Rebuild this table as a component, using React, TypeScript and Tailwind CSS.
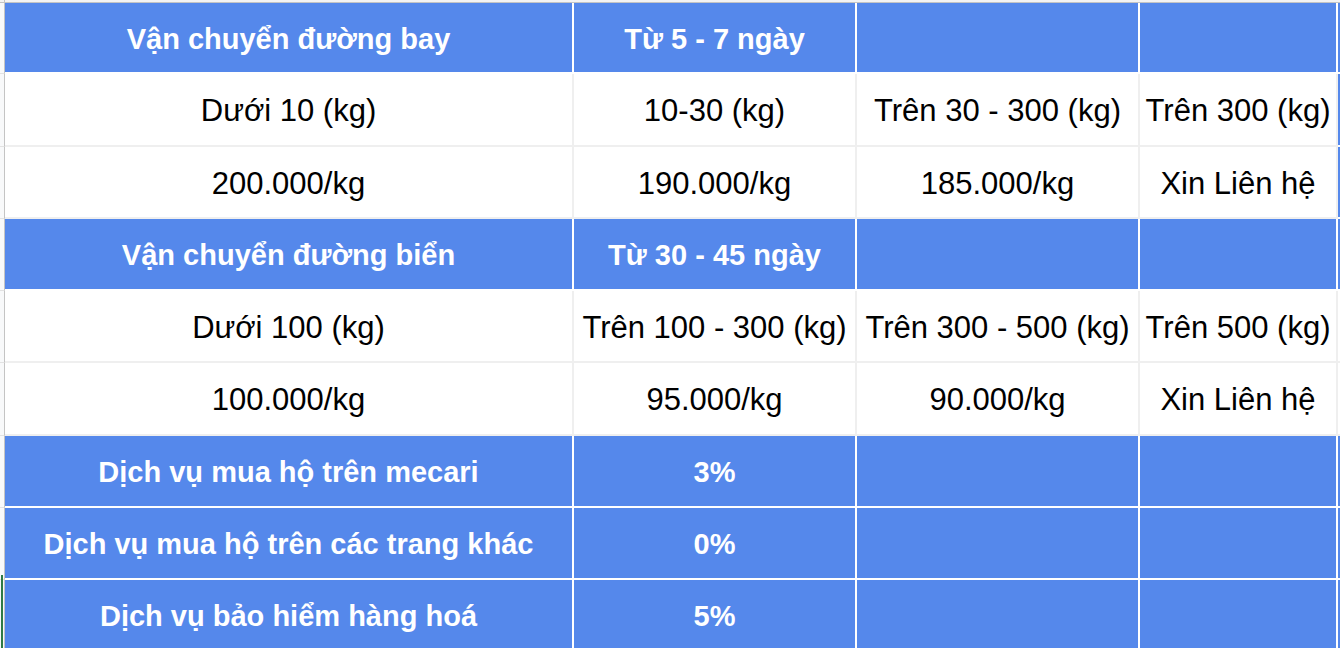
type Cell = {
  text?: string;
  blue?: boolean;
  bold?: boolean;
};

type Row = {
  height: string;
  cells: Cell[];
  edgeBlue: boolean;
  marker?: boolean;
};

const widths = ["w-[569px]", "w-[283px]", "w-[283px]", "w-[198px]"];

const rows: Row[] = [
  {
    height: "h-[71px]",
    edgeBlue: true,
    cells: [
      { text: "Vận chuyển đường bay", blue: true, bold: true },
      { text: "Từ 5 - 7 ngày", blue: true, bold: true },
      { blue: true },
      { blue: true },
    ],
  },
  {
    height: "h-[73px]",
    edgeBlue: true,
    cells: [
      { text: "Dưới 10 (kg)" },
      { text: "10-30 (kg)" },
      { text: "Trên 30 - 300 (kg)" },
      { text: "Trên 300 (kg)" },
    ],
  },
  {
    height: "h-[72px]",
    edgeBlue: true,
    cells: [
      { text: "200.000/kg" },
      { text: "190.000/kg" },
      { text: "185.000/kg" },
      { text: "Xin Liên hệ" },
    ],
  },
  {
    height: "h-[72px]",
    edgeBlue: true,
    cells: [
      { text: "Vận chuyển đường biển", blue: true, bold: true },
      { text: "Từ 30 - 45 ngày", blue: true, bold: true },
      { blue: true },
      { blue: true },
    ],
  },
  {
    height: "h-[72px]",
    edgeBlue: false,
    cells: [
      { text: "Dưới 100 (kg)" },
      { text: "Trên 100 - 300 (kg)" },
      { text: "Trên 300 - 500 (kg)" },
      { text: "Trên 500 (kg)" },
    ],
  },
  {
    height: "h-[73px]",
    edgeBlue: false,
    cells: [
      { text: "100.000/kg" },
      { text: "95.000/kg" },
      { text: "90.000/kg" },
      { text: "Xin Liên hệ" },
    ],
  },
  {
    height: "h-[72px]",
    edgeBlue: true,
    cells: [
      { text: "Dịch vụ mua hộ trên mecari", blue: true, bold: true },
      { text: "3%", blue: true, bold: true },
      { blue: true },
      { blue: true },
    ],
  },
  {
    height: "h-[72px]",
    edgeBlue: true,
    cells: [
      { text: "Dịch vụ mua hộ trên các trang khác", blue: true, bold: true },
      { text: "0%", blue: true, bold: true },
      { blue: true },
      { blue: true },
    ],
  },
  {
    height: "h-[72px]",
    edgeBlue: true,
    marker: true,
    cells: [
      { text: "Dịch vụ bảo hiểm hàng hoá", blue: true, bold: true },
      { text: "5%", blue: true, bold: true },
      { blue: true },
      { blue: true },
    ],
  },
];

export default function App() {
  return (
    <div className="h-[648px] w-[1340px] overflow-hidden bg-white font-['Liberation_Sans',Arial,sans-serif]">
      {/* top frozen strip */}
      <div className="flex h-[3px] border-b border-[#c4c4c4] bg-[#f3f3f3]">
        <div className="w-[5px] shrink-0 border-r border-[#c4c4c4]" />
      </div>

      {rows.map((row, ri) => (
        <div key={ri} className={`flex ${row.height}`}>
          {/* row gutter */}
          <div className="relative w-[5px] shrink-0 border-r border-b border-r-[#c4c4c4] border-b-[#e2e2e2] bg-[#f8f9fa]">
            {row.marker && (
              <div className="absolute -top-[5px] bottom-0 left-[1px] w-[2px] bg-[#2f7a45]" />
            )}
          </div>

          {row.cells.map((cell, ci) => (
            <div
              key={ci}
              className={
                cell.blue
                  ? `${widths[ci]} flex shrink-0 items-center justify-center border-r-2 border-b-2 border-white bg-[#5588eb] pt-[4px] text-[29px] text-white`
                  : `${widths[ci]} flex shrink-0 items-center justify-center border-r-2 border-b-2 border-[#efefef] bg-white pt-[4px] text-[31px] text-black`
              }
            >
              <span className={cell.bold ? "whitespace-nowrap font-bold" : "whitespace-nowrap"}>
                {cell.text}
              </span>
            </div>
          ))}

          {/* partially visible next column */}
          <div
            className={
              row.edgeBlue
                ? "flex-1 border-b-2 border-white bg-[#5588eb]"
                : "flex-1 border-b-2 border-[#efefef] bg-white"
            }
          />
        </div>
      ))}
    </div>
  );
}
